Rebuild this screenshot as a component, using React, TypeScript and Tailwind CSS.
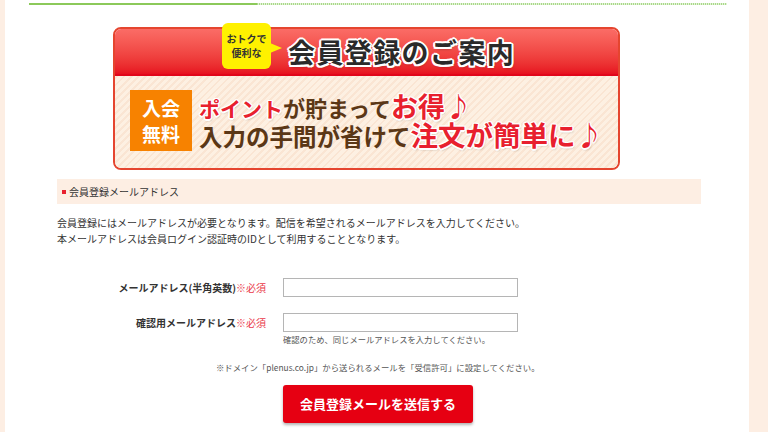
const jp = "font-['Noto_Sans_CJK_JP','Noto_Sans',sans-serif]";

// ─── Banner ───────────────────────────────────────────────────────────────────

function Banner() {
  const outline =
    '[text-shadow:2px_0_#fff,-2px_0_#fff,0_2px_#fff,0_-2px_#fff,1.5px_1.5px_#fff,-1.5px_-1.5px_#fff,1.5px_-1.5px_#fff,-1.5px_1.5px_#fff,1px_2px_3px_rgba(0,0,0,0.35)]';
  const redGlow =
    '[text-shadow:1.5px_0_#fff,-1.5px_0_#fff,0_1.5px_#fff,0_-1.5px_#fff,1px_1px_#fff,-1px_-1px_#fff,1px_-1px_#fff,-1px_1px_#fff,1px_2px_2px_rgba(0,0,0,0.25)]';

  return (
    <div className="relative ml-[56px] w-[507px]">
      <div className="overflow-hidden rounded-[8px] border-2 border-[#e5452f]">
        {/* Header */}
        <div className="flex h-[47px] items-center border-b-2 border-[#e1061a] bg-gradient-to-b from-[#fb6c66] to-[#e70f1f] pl-[173px]">
          <span className={`text-[27px] font-bold leading-none tracking-[1.4px] text-[#2a2a2a] ${outline}`}>
            会員登録のご案内
          </span>
        </div>
        {/* Body */}
        <div className="flex h-[92px] items-start gap-[7px] bg-[repeating-linear-gradient(-45deg,#fdf0e2_0px,#fdf0e2_3px,#fae5d3_3px,#fae5d3_5px)] pl-[15px] pt-[14px]">
          <div className="flex h-[61px] w-[62px] flex-col items-center justify-center bg-[#f78200] text-[19px] font-bold leading-[26px] text-white">
            <span>入会</span>
            <span>無料</span>
          </div>
          <div className="mt-[3px] flex flex-col font-bold text-[#5b3716]">
            <p className="flex h-[28px] items-baseline whitespace-nowrap">
              <span className={`text-[21px] leading-[26px] text-[#e8202e] ${redGlow}`}>ポイント</span>
              <span className="text-[22px] leading-[26px]">が貯まって</span>
              <span className={`text-[27px] leading-[26px] text-[#e8202e] ${redGlow}`}>お得♪</span>
            </p>
            <p className="flex h-[28px] items-baseline whitespace-nowrap">
              <span className="text-[23.5px] leading-[26px]">入力の手間が省けて</span>
              <span className={`text-[27.5px] leading-[26px] text-[#e8202e] ${redGlow}`}>注文が簡単に♪</span>
            </p>
          </div>
        </div>
      </div>
      {/* Speech bubble */}
      <div className="absolute left-[109px] top-[-4px] flex h-[46px] w-[49px] flex-col items-center justify-center rounded-[6px] bg-[#fff100] text-[10px] font-bold leading-[14px] text-[#333]">
        <span>おトクで</span>
        <span>便利な</span>
        <span className="absolute right-[-11px] top-[20px] h-0 w-0 border-y-[5px] border-l-[12px] border-y-transparent border-l-[#fff100]" />
      </div>
    </div>
  );
}

// ─── Form row ─────────────────────────────────────────────────────────────────

function Row({ label, hint }: { label: string; hint?: string }) {
  return (
    <div className="flex items-start">
      <div className="flex h-[19px] w-[226px] items-center justify-end pr-[17px] text-[10px]">
        <span className="font-bold text-[#333]">{label}</span>
        <span className="text-[#ea3a4a]">※必須</span>
      </div>
      <div className="flex flex-col">
        <input className="h-[19px] w-[235px] border border-[#b5b5b5] bg-white outline-none" />
        {hint && <p className="mt-[2px] text-[8.3px] leading-[11px] text-[#555]">{hint}</p>}
      </div>
    </div>
  );
}

// ─── Page ─────────────────────────────────────────────────────────────────────

export default function App() {
  return (
    <div className={`flex h-[432px] w-[768px] overflow-hidden bg-[#fdeee3] ${jp}`}>
      <div className="ml-[5px] h-full w-[744px] bg-white">
        {/* Green rule */}
        <div className="ml-[24px] mt-[3px] flex h-[2px] w-[698px]">
          <div className="h-full w-[228px] bg-[#8cc95a]" />
          <div className="h-full flex-1 bg-[repeating-linear-gradient(90deg,#a9d98a_0px,#a9d98a_1px,#e3f2d6_1px,#e3f2d6_2px)]" />
        </div>

        <div className="ml-[52px] w-[644px] pt-[22px]">
          <Banner />

          {/* Section header */}
          <div className="mt-[9px] flex h-[25px] items-center gap-[3px] bg-[#fdeee3] pl-[5px] text-[10px] text-[#333]">
            <span className="h-[4px] w-[4px] bg-[#e8202e]" />
            <span>会員登録メールアドレス</span>
          </div>

          {/* Description */}
          <div className="mt-[11px] text-[10px] leading-[16px] text-[#333]">
            <p>会員登録にはメールアドレスが必要となります。配信を希望されるメールアドレスを入力してください。</p>
            <p>本メールアドレスは会員ログイン認証時のIDとして利用することとなります。</p>
          </div>

          {/* Form */}
          <div className="mt-[31px] flex flex-col gap-[16px]">
            <Row label="メールアドレス(半角英数)" />
            <Row label="確認用メールアドレス" hint="確認のため、同じメールアドレスを入力してください。" />
          </div>

          <p className="mt-[17px] pl-[159px] text-[8.4px] leading-[11px] text-[#555]">
            ※ドメイン「plenus.co.jp」から送られるメールを「受信許可」に設定してください。
          </p>

          <button className="ml-[226px] mt-[12px] flex h-[38px] w-[190px] items-center justify-center rounded-[3px] bg-[#e60012] text-[13px] font-bold text-white shadow-[0_2px_3px_rgba(0,0,0,0.3)]">
            会員登録メールを送信する
          </button>
        </div>
      </div>
    </div>
  );
}
